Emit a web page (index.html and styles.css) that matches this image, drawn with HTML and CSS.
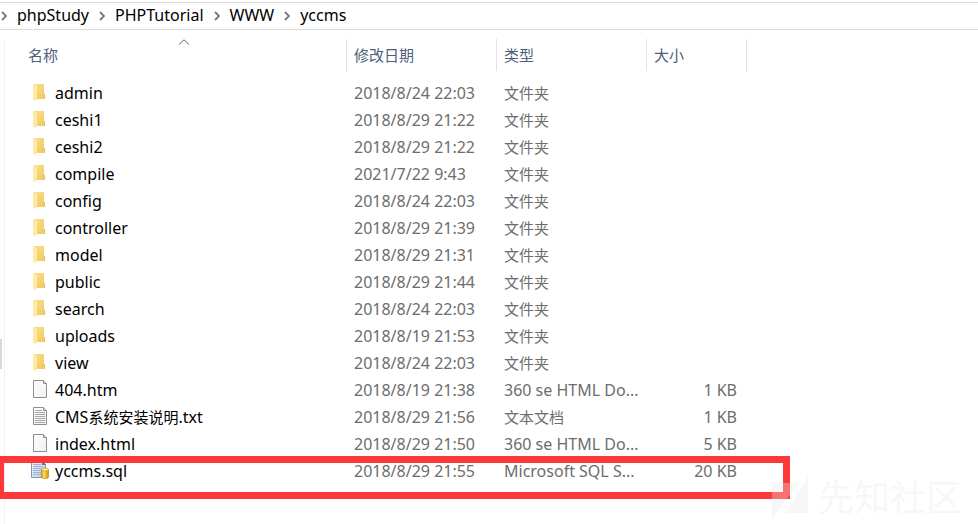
FILE: index.html
```
<!DOCTYPE html>
<html lang="zh-CN">
<head>
<meta charset="utf-8">
<meta name="viewport" content="width=device-width, initial-scale=1">
<title>yccms</title>
<link rel="stylesheet" href="styles.css">
</head>
<body>
<svg class="defs" aria-hidden="true">
  <defs>
    <linearGradient id="gold" x1="0" x2="1" y1="0" y2="1"><stop offset="0" stop-color="#fbe08c"/><stop offset="1" stop-color="#efc860"/></linearGradient>
    <linearGradient id="drum" x1="0" x2="1"><stop offset="0" stop-color="#d99a12"/><stop offset=".35" stop-color="#ffdf5a"/><stop offset="1" stop-color="#cf8f0c"/></linearGradient>
    <linearGradient id="sheet" x1="0" x2="1" y1="0" y2="1"><stop offset="0" stop-color="#fdfefe"/><stop offset="1" stop-color="#eef1f3"/></linearGradient>
    <linearGradient id="bluesheet" x1="0" x2="1" y1="0" y2="1"><stop offset="0" stop-color="#f6f9fe"/><stop offset="1" stop-color="#b9cbe6"/></linearGradient>
    <symbol id="folder" viewBox="0 0 20 20">
      <path fill="url(#gold)" d="M4 2h10v10h1v5H4z"/>
      <path fill="#e9bd55" d="M14 12h1v5h-1z"/>
      <path fill="#ffe9a8" d="M3 2l4 2v11l-1 4-3-1z"/>
    </symbol>
    <symbol id="page" viewBox="0 0 20 20">
      <path fill="url(#sheet)" stroke="#8f8f8f" d="M3.500 1.500h10l3 3v14h-13z"/>
      <path fill="#d9dcde" stroke="#8f8f8f" d="M13.500 1.500v3h3"/>
    </symbol>
    <symbol id="text" viewBox="0 0 20 20">
      <use href="#page"/>
      <path stroke="#a8a8a8" fill="none" d="M5 4.500h7M5 6.500h10M5 8.500h10M5 10.500h10M5 12.500h10M5 14.500h10M5 16.500h10"/>
    </symbol>
    <symbol id="sql" viewBox="0 0 20 20">
      <path fill="url(#bluesheet)" stroke="#8695b0" d="M1.500 1.500h11l3 3v13h-14z"/>
      <path fill="#5f7299" d="M12 1l4 4h-4z"/>
      <path stroke="#9db1d6" fill="none" d="M3 4.500h8M3 6.500h10M3 8.500h10M3 10.500h8M3 12.500h8M3 14.500h8"/>
      <path fill="url(#drum)" stroke="#b57f13" stroke-width=".6" d="M11.500 9.500v7.500c0 2 7 2 7 0V9.500z"/>
      <ellipse cx="15" cy="9.500" rx="3.500" ry="1.500" fill="#ffe98e" stroke="#c8901c" stroke-width=".6"/>
    </symbol>
    <symbol id="chevron" viewBox="0 0 6 10"><path fill="none" stroke="#777" stroke-width="1.800" d="M1 1l4 4-4 4"/></symbol>
  </defs>
</svg>

<nav class="path" aria-label="路径">
  <svg class="sep"><use href="#chevron"/></svg><a href="#">phpStudy</a>
  <svg class="sep"><use href="#chevron"/></svg><a href="#">PHPTutorial</a>
  <svg class="sep"><use href="#chevron"/></svg><a href="#">WWW</a>
  <svg class="sep"><use href="#chevron"/></svg><a href="#">yccms</a>
</nav>

<main class="pane">
  <table class="files">
    <colgroup><col class="c-name"><col class="c-date"><col class="c-type"><col class="c-size"></colgroup>
    <thead>
      <tr>
        <th scope="col" aria-sort="ascending">名称<svg class="sort" viewBox="0 0 12 6"><path fill="none" stroke="#666" d="M1 5.500L6 .8l5 4.700"/></svg></th>
        <th scope="col">修改日期</th><th scope="col">类型</th><th scope="col">大小</th>
      </tr>
    </thead>
    <tbody>
      <tr><td><svg class="icon"><use href="#folder"/></svg>admin</td><td>2018/8/24 22:03</td><td class="zh">文件夹</td><td></td></tr>
      <tr><td><svg class="icon"><use href="#folder"/></svg>ceshi1</td><td>2018/8/29 21:22</td><td class="zh">文件夹</td><td></td></tr>
      <tr><td><svg class="icon"><use href="#folder"/></svg>ceshi2</td><td>2018/8/29 21:22</td><td class="zh">文件夹</td><td></td></tr>
      <tr><td><svg class="icon"><use href="#folder"/></svg>compile</td><td>2021/7/22 9:43</td><td class="zh">文件夹</td><td></td></tr>
      <tr><td><svg class="icon"><use href="#folder"/></svg>config</td><td>2018/8/24 22:03</td><td class="zh">文件夹</td><td></td></tr>
      <tr><td><svg class="icon"><use href="#folder"/></svg>controller</td><td>2018/8/29 21:39</td><td class="zh">文件夹</td><td></td></tr>
      <tr><td><svg class="icon"><use href="#folder"/></svg>model</td><td>2018/8/29 21:31</td><td class="zh">文件夹</td><td></td></tr>
      <tr><td><svg class="icon"><use href="#folder"/></svg>public</td><td>2018/8/29 21:44</td><td class="zh">文件夹</td><td></td></tr>
      <tr><td><svg class="icon"><use href="#folder"/></svg>search</td><td>2018/8/24 22:03</td><td class="zh">文件夹</td><td></td></tr>
      <tr><td><svg class="icon"><use href="#folder"/></svg>uploads</td><td>2018/8/19 21:53</td><td class="zh">文件夹</td><td></td></tr>
      <tr><td><svg class="icon"><use href="#folder"/></svg>view</td><td>2018/8/24 22:03</td><td class="zh">文件夹</td><td></td></tr>
      <tr><td><svg class="icon"><use href="#page"/></svg>404.htm</td><td>2018/8/19 21:38</td><td>360 se HTML Do...</td><td>1 KB</td></tr>
      <tr><td><svg class="icon"><use href="#text"/></svg>CMS<span class="zh">系统安装说明</span>.txt</td><td>2018/8/29 21:56</td><td class="zh">文本文档</td><td>1 KB</td></tr>
      <tr><td><svg class="icon"><use href="#page"/></svg>index.html</td><td>2018/8/29 21:50</td><td>360 se HTML Do...</td><td>5 KB</td></tr>
      <tr><td><svg class="icon"><use href="#sql"/></svg>yccms.sql</td><td>2018/8/29 21:55</td><td>Microsoft SQL S...</td><td>20 KB</td></tr>
    </tbody>
  </table>
  <div class="mark"></div>
  <div class="thumb"></div>
</main>

<div class="watermark">
  <svg viewBox="0 0 36 44"><path fill="currentColor" d="M0 7h27L0 43zM36 0v37H14z"/></svg>
  <span>先知社区</span>
</div>
</body>
</html>
```
FILE: styles.css
```
* { box-sizing: border-box; }

body {
  margin: 0;
  min-height: 100vh;
  display: flex;
  flex-direction: column;
  position: relative;
  overflow: hidden;
  background: #fff;
  color: #000;
  font: 16px/27px "Noto Sans", "Noto Sans CJK SC", sans-serif;
}

.defs { position: absolute; width: 0; height: 0; }

.path {
  display: flex;
  align-items: center;
  gap: 10px;
  height: 28px;
  margin-top: 2px;
  padding: 0 0 1px 1px;
  border-top: 1px solid #d9d9d9;
  border-bottom: 1px solid #d9d9d9;
}
.path a { color: inherit; text-decoration: none; }
.sep { width: 6px; height: 10px; flex: none; }

.pane {
  position: relative;
  flex: 1;
  margin: 9px 0 0 4px;
  border-left: 1px solid #f0f0f0;
}

.files {
  width: 742px;
  table-layout: fixed;
  border-collapse: separate;
  border-spacing: 0;
}
.c-name { width: 342px; }
.c-date, .c-type { width: 150px; }
.c-size { width: 100px; }

th {
  position: relative;
  height: 32px;
  padding: 0 7px;
  border-right: 1px solid #e2e2e2;
  color: #4c607a;
  font-size: 15px;
  font-weight: 400;
  line-height: 32px;
  text-align: left;
}
th:first-child { padding-left: 23px; }
.sort { position: absolute; left: 173px; top: 0; width: 12px; height: 6px; }

tbody::before { content: ""; display: block; height: 9px; }

td {
  height: 27px;
  padding: 0 7px;
  color: #6d6d6d;
  white-space: nowrap;
}
td:first-child { padding-left: 25px; color: #000; }
td:last-child { padding-right: 10px; text-align: right; }

.zh { font-family: "Noto Sans CJK SC", sans-serif; font-size: 15px; line-height: 20px; }
td.zh { padding-bottom: 2px; }

.icon { width: 20px; height: 20px; margin: -2px 5px 4px 0; vertical-align: middle; }

.mark {
  position: absolute;
  left: -8px;
  top: 417px;
  width: 793px;
  height: 43px;
  border: 7px solid #fc3838;
}

.thumb {
  position: absolute;
  left: -5px;
  top: 300px;
  width: 2px;
  height: 30px;
  background: #d9d9d9;
}

.watermark {
  position: absolute;
  right: 16px;
  bottom: 4px;
  display: flex;
  align-items: center;
  gap: 10px;
  color: rgba(232, 232, 232, 0.34);
  font-size: 36px;
  line-height: 44px;
}
.watermark svg { width: 36px; height: 44px; }
```
